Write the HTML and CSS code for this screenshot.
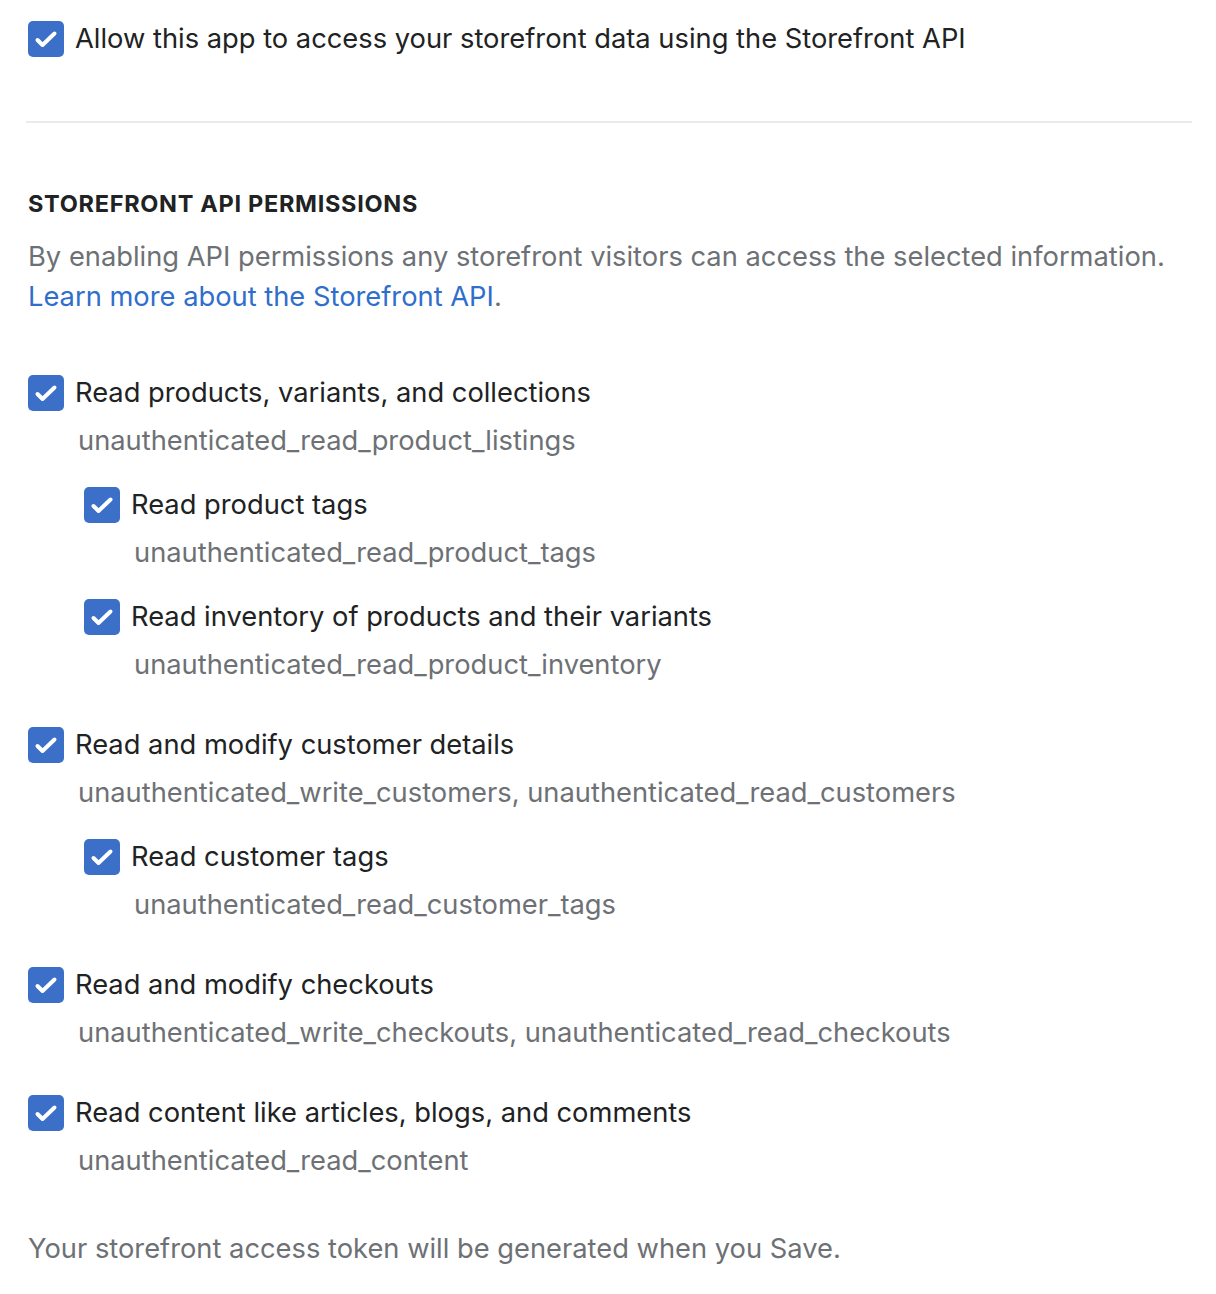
FILE: index.html
```html
<!DOCTYPE html>
<html lang="en">
<head>
<meta charset="utf-8">
<title>Storefront API</title>
<link rel="stylesheet" href="styles.css">
</head>
<body>
<div class="page">
  <label class="choice top-choice">
    <span class="box"><svg viewBox="0 0 36 36"><path d="M9.5 19 L14.5 24 L26.5 12.5"/></svg></span>
    <span class="label">Allow this app to access your storefront data using the Storefront API</span>
  </label>

  <hr class="divider">

  <h2 class="subheading">Storefront API permissions</h2>
  <p class="desc">By enabling API permissions any storefront visitors can access the selected information. <a href="#" class="link">Learn more about the Storefront API</a>.</p>

  <ul class="perms">
    <li class="perm">
      <label class="choice">
        <span class="box"><svg viewBox="0 0 36 36"><path d="M9.5 19 L14.5 24 L26.5 12.5"/></svg></span>
        <span class="label">Read products, variants, and collections</span>
      </label>
      <div class="scope">unauthenticated_read_product_listings</div>
      <ul class="children">
        <li class="perm">
          <label class="choice">
            <span class="box"><svg viewBox="0 0 36 36"><path d="M9.5 19 L14.5 24 L26.5 12.5"/></svg></span>
            <span class="label">Read product tags</span>
          </label>
          <div class="scope">unauthenticated_read_product_tags</div>
        </li>
        <li class="perm">
          <label class="choice">
            <span class="box"><svg viewBox="0 0 36 36"><path d="M9.5 19 L14.5 24 L26.5 12.5"/></svg></span>
            <span class="label">Read inventory of products and their variants</span>
          </label>
          <div class="scope">unauthenticated_read_product_inventory</div>
        </li>
      </ul>
    </li>
    <li class="perm">
      <label class="choice">
        <span class="box"><svg viewBox="0 0 36 36"><path d="M9.5 19 L14.5 24 L26.5 12.5"/></svg></span>
        <span class="label">Read and modify customer details</span>
      </label>
      <div class="scope">unauthenticated_write_customers, unauthenticated_read_customers</div>
      <ul class="children">
        <li class="perm">
          <label class="choice">
            <span class="box"><svg viewBox="0 0 36 36"><path d="M9.5 19 L14.5 24 L26.5 12.5"/></svg></span>
            <span class="label">Read customer tags</span>
          </label>
          <div class="scope">unauthenticated_read_customer_tags</div>
        </li>
      </ul>
    </li>
    <li class="perm">
      <label class="choice">
        <span class="box"><svg viewBox="0 0 36 36"><path d="M9.5 19 L14.5 24 L26.5 12.5"/></svg></span>
        <span class="label">Read and modify checkouts</span>
      </label>
      <div class="scope">unauthenticated_write_checkouts, unauthenticated_read_checkouts</div>
    </li>
    <li class="perm">
      <label class="choice">
        <span class="box"><svg viewBox="0 0 36 36"><path d="M9.5 19 L14.5 24 L26.5 12.5"/></svg></span>
        <span class="label">Read content like articles, blogs, and comments</span>
      </label>
      <div class="scope">unauthenticated_read_content</div>
    </li>
  </ul>

  <p class="footer">Your storefront access token will be generated when you Save.</p>
</div>
</body>
</html>
```

FILE: styles.css
```css
* { box-sizing: border-box; }
html, body { margin: 0; padding: 0; background: #ffffff; }
body {
  font-family: Inter, "Noto Sans", "Liberation Sans", sans-serif;
  font-size: 27.3px;
  line-height: 40px;
  color: #202223;
}
.page {
  padding: 19px 24px 0 28px;
}
.choice {
  display: flex;
  align-items: center;
  gap: 11px;
  height: 40px;
}
.box {
  flex: 0 0 36px;
  width: 36px;
  height: 36px;
  border-radius: 5px;
  background: #3c6fc8;
  display: flex;
}
.box svg {
  width: 36px;
  height: 36px;
  fill: none;
  stroke: #ffffff;
  stroke-width: 4;
  stroke-linecap: round;
  stroke-linejoin: round;
}
.label { white-space: nowrap; }
.divider {
  border: 0;
  height: 2px;
  background: #ebebeb;
  margin: 62px 0 0 -2px;
}
.subheading {
  margin: 65px 0 0;
  font-size: 23.5px;
  line-height: 32px;
  font-weight: 700;
  text-transform: uppercase;
  letter-spacing: 0.7px;
  color: #202223;
}
.desc {
  margin: 17px 0 0;
  color: #6d7175;
}
.link {
  color: #2f6ecb;
  text-decoration: none;
}
.perms, .children {
  list-style: none;
  margin: 0;
  padding: 0;
}
.perms {
  margin-top: 56px;
  display: flex;
  flex-direction: column;
  gap: 40px;
}
.children {
  margin-top: 24px;
  padding-left: 56px;
  display: flex;
  flex-direction: column;
  gap: 24px;
}
.scope {
  margin-top: 8px;
  padding-left: 50px;
  color: #6d7175;
  white-space: nowrap;
}
.footer {
  margin: 48px 0 0;
  color: #6d7175;
}
```
